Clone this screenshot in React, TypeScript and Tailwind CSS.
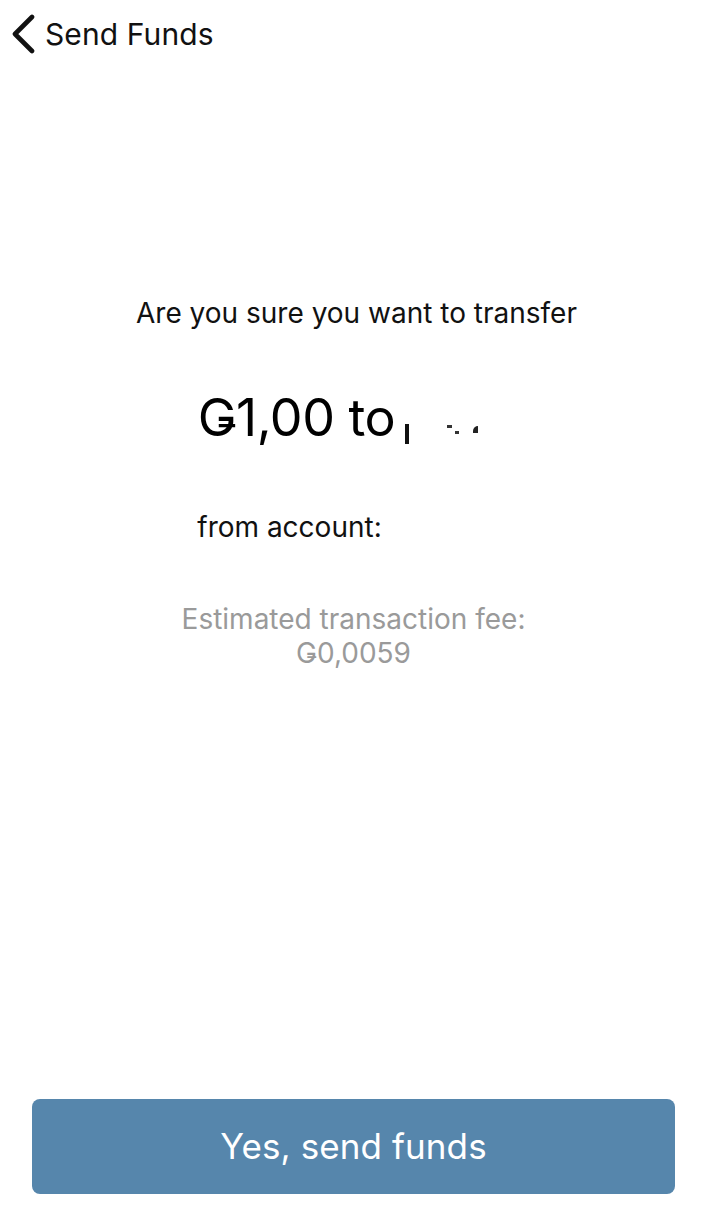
import React from "react";

const font = { fontFamily: "Inter, 'Noto Sans', sans-serif" };

function Header() {
  return (
    <div className="flex items-center h-[68px] pl-[10px]">
      <svg width="26" height="40" viewBox="0 0 26 40" className="mr-[9px]">
        <path d="M22 3 L5 20 L22 37" fill="none" stroke="#111" strokeWidth="4.6" strokeLinecap="round" strokeLinejoin="round" />
      </svg>
      <span className="text-[30px] text-[#111] tracking-[0.1px]">Send Funds</span>
    </div>
  );
}

function Redacted() {
  // what survived of the blurred-out name
  return (
    <span className="inline-flex items-end h-[44px] w-[110px] ml-[10px] relative top-[6px]">
      <span className="inline-block w-[4px] h-[20px] bg-[#111] mb-[2px]" />
      <span className="inline-block w-[5px] h-[3px] bg-[#333] ml-[38px] mb-[18px]" />
      <span className="inline-block w-[4px] h-[3px] bg-[#333] ml-[3px] mb-[12px]" />
      <span className="inline-block w-[5px] h-[7px] bg-[#222] ml-[14px] mb-[13px] rounded-tl-full" />
    </span>
  );
}

export default function App() {
  return (
    <div className="w-[713px] h-[1230px] bg-white flex flex-col" style={font}>
      <Header />
      <div className="flex flex-col items-center text-center flex-1">
        <p className="mt-[228px] text-[28px] leading-[34px] text-[#111]">Are you sure you want to transfer</p>
        <div className="mt-[58px] flex items-center text-[52px] leading-[60px] text-black tracking-[-0.5px]">
          <span>Ǥ1,00 to</span>
          <Redacted />
        </div>
        <p className="mt-[62px] ml-[16px] text-[28px] leading-[34px] text-[#111] flex items-center">
          from account:
          <span className="inline-block w-[150px]" />
        </p>
        <div className="mt-[58px] ml-[-6px] text-[28px] leading-[34px] text-[#9a9a9a]">
          <p>Estimated transaction fee:</p>
          <p>Ǥ0,0059</p>
        </div>
      </div>
      <div className="px-[32px] pb-[36px]">
        <button className="w-[643px] h-[95px] rounded-[8px] bg-[#5686ac] text-white text-[35px] tracking-[0.1px]" style={font}>
          Yes, send funds
        </button>
      </div>
    </div>
  );
}
